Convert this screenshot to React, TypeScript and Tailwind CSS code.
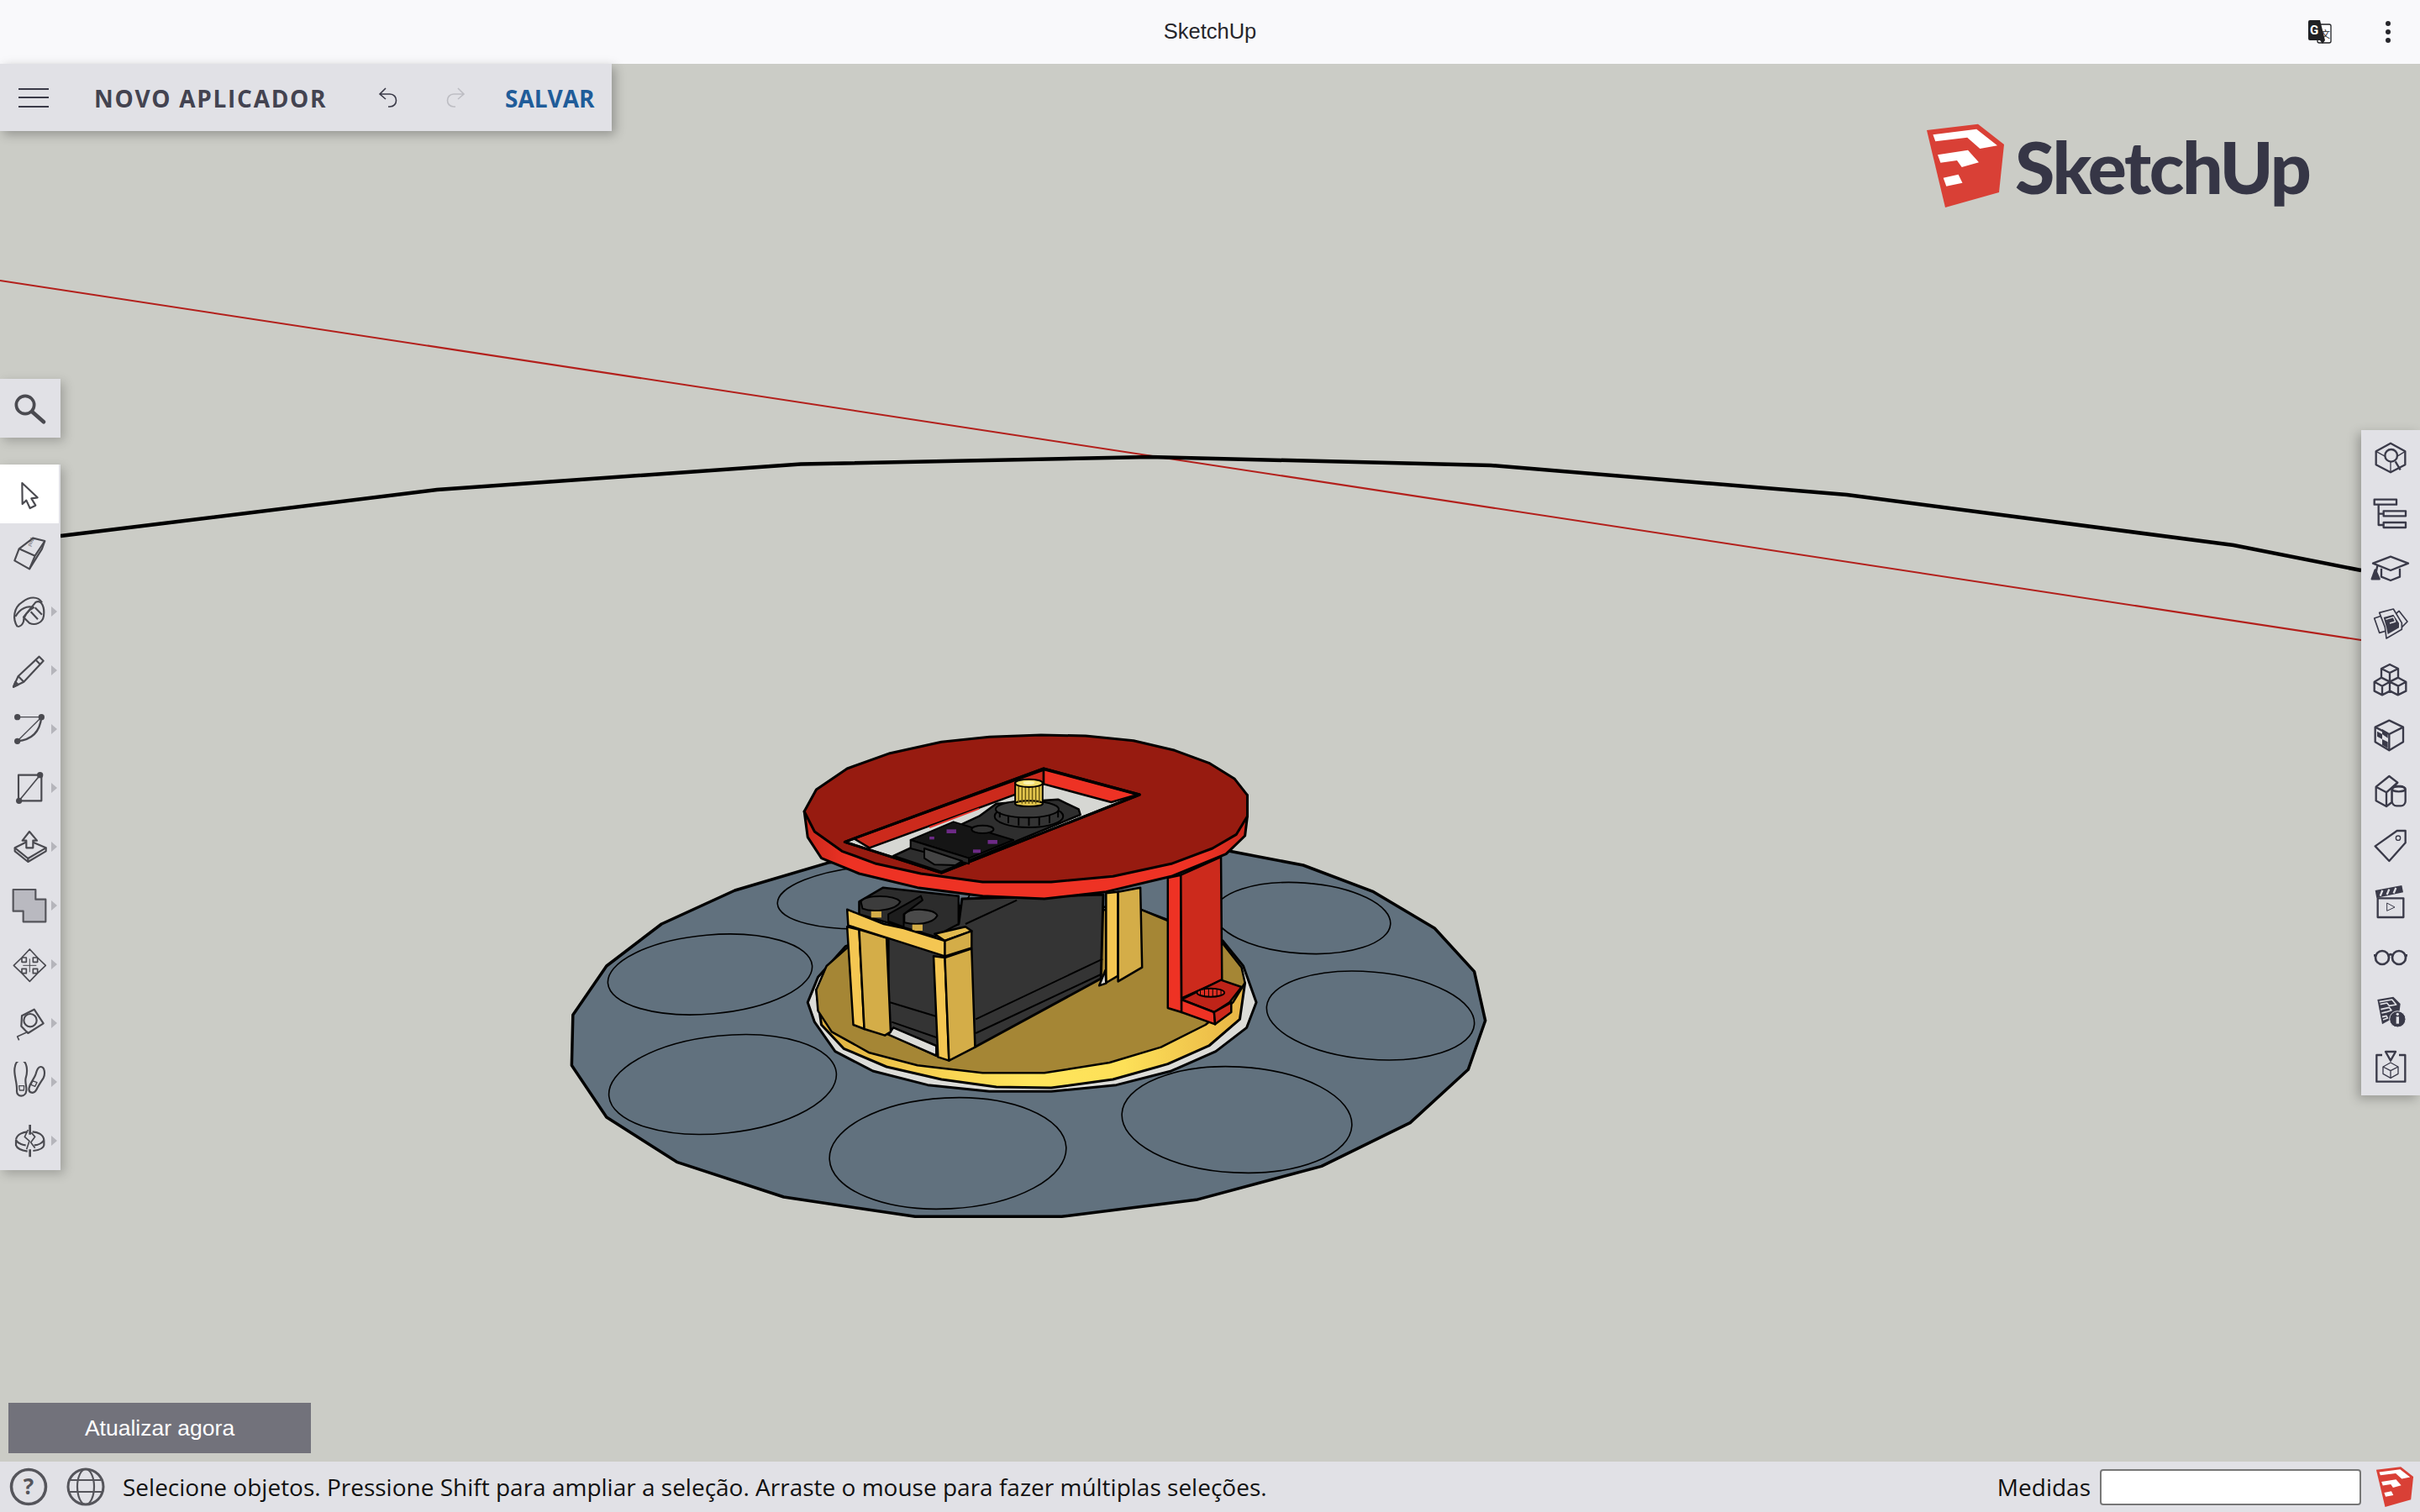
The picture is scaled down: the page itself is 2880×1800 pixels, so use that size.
import type { ReactNode } from "react";

const dark = "#3a3a49";
const tool = "#4a4a50";

function LogoCube({ className }: { className: string }) {
  return (
    <svg viewBox="0 0 92 100" className={className}>
      <polygon points="0,8 61,0.7 92,25 86,82 22,100" fill="#d94036" />
      <polygon points="7.4,13.3 59.2,6.7 84,26.3 63.3,30 48.2,16.7 10.3,21.3" fill="#fff" />
      <polygon points="13,37.3 49,31.7 62,46.3 41.7,52 36,44 16.4,46.7" fill="#fff" />
      <polygon points="19.7,64.7 37.6,60.7 42.5,70.7 23.3,74.7" fill="#fff" />
    </svg>
  );
}

// left toolbar icons, drawn at 3x so the coordinates follow the crop
function LeftIcon({ cy, children }: { cy: number; children: ReactNode }) {
  return (
    <svg
      viewBox={`36 ${cy - 72} 144 144`}
      className="h-[48px] w-[48px] shrink-0"
      fill="none"
      stroke={tool}
      strokeWidth="6.5"
      strokeLinejoin="round"
    >
      {children}
    </svg>
  );
}

function RightIcon({ cy, children }: { cy: number; children: ReactNode }) {
  return (
    <svg
      viewBox={`123 ${cy - 72} 144 144`}
      className="h-[48px] w-[48px]"
      fill="none"
      stroke={dark}
      strokeWidth="7"
      strokeLinejoin="round"
    >
      {children}
    </svg>
  );
}

const leftTools: { cy: number; arrow: boolean; icon: ReactNode }[] = [
  {
    cy: 654,
    arrow: false,
    icon: (
      <>
        <polygon points="52,682 68,640 118,602 160,612 150,640 105,712" />
        <path d="M68,640 L125,665 L105,712 M125,665 L160,612" />
        <text
          x="0"
          y="0"
          transform="translate(108,632) rotate(-62)"
          fontSize="20"
          fill={tool}
          stroke="none"
          fontFamily="Liberation Serif, serif"
        >
          pink
        </text>
      </>
    ),
  },
  {
    cy: 864,
    arrow: true,
    icon: (
      <>
        <path d="M62,918 C44,890 48,850 80,830 C105,810 135,808 150,832" />
        <path d="M55,882 C72,852 98,842 120,850 C100,860 84,880 84,900 C80,912 70,918 62,918" />
        <path d="M128,830 C150,822 160,850 156,880 C152,905 125,915 105,905 L84,884 L128,830 Z" />
        <path d="M110,865 L135,892 M125,850 L150,875" />
      </>
    ),
  },
  {
    cy: 1074,
    arrow: true,
    icon: (
      <>
        <polygon points="48,1133 65,1095 140,1025 155,1040 85,1115" />
        <path d="M65,1095 L85,1115 M128,1037 L143,1052" />
        <polygon points="48,1133 55,1115 65,1125" fill={tool} />
      </>
    ),
  },
  {
    cy: 1284,
    arrow: true,
    icon: (
      <>
        <path d="M62,1241 H148 L62,1327" strokeWidth="4" />
        <path d="M62,1327 Q140,1320 148,1241" strokeWidth="7" />
        <circle cx="62" cy="1241" r="11" fill={tool} stroke="none" />
        <circle cx="148" cy="1241" r="11" fill={tool} stroke="none" />
        <circle cx="62" cy="1327" r="11" fill={tool} stroke="none" />
      </>
    ),
  },
  {
    cy: 54,
    arrow: true,
    icon: (
      <>
        <path d="M143,8 H66 V100 H148 V8" />
        <path d="M68,100 L143,8" strokeWidth="5" />
        <circle cx="143" cy="8" r="11" fill={tool} stroke="none" />
        <circle cx="68" cy="100" r="11" fill={tool} stroke="none" />
      </>
    ),
  },
  {
    cy: 264,
    arrow: true,
    icon: (
      <>
        <polygon points="53,268 92,248 118,248 164,268 100,306" />
        <path d="M53,268 V280 L100,318 L164,280 V268 M100,306 V318" />
        <polygon points="105,210 132,242 118,242 118,268 94,268 94,242 80,242" fill="#e1e1e6" />
      </>
    ),
  },
  {
    cy: 474,
    arrow: true,
    icon: <polygon points="47,417 127,417 127,452 163,452 163,532 83,532 83,494 47,494" fill="#b9b9c0" stroke="#55555b" />,
  },
  {
    cy: 684,
    arrow: true,
    icon: (
      <>
        <polygon
          points="106,630 134,660 118,660 118,676 134,676 134,660 163,688 134,716 134,700 118,700 118,716 134,716 106,745 78,716 94,716 94,700 78,700 78,716 49,688 78,660 78,676 94,676 94,660 78,660"
          strokeWidth="5"
        />
        <path d="M106,664 V712 M82,688 H130" strokeWidth="3" />
      </>
    ),
  },
  {
    cy: 894,
    arrow: true,
    icon: (
      <>
        <polygon points="78,868 122,845 155,895 100,930 76,905" />
        <circle cx="108" cy="884" r="23" />
        <path d="M100,925 L62,942 L68,955" strokeWidth="5" />
      </>
    ),
  },
  {
    cy: 1104,
    arrow: true,
    icon: (
      <>
        <path d="M75,1027 C97,1027 100,1065 92,1090 C88,1105 96,1120 94,1135 C92,1160 58,1160 60,1135 C62,1110 50,1080 52,1060 C53,1040 60,1027 75,1027 Z" />
        <path d="M68,1118 L86,1118 L85,1134 L70,1134 Z" strokeWidth="4" />
        <path d="M145,1050 C160,1050 162,1075 155,1090 C145,1105 135,1120 130,1132 C122,1148 100,1145 104,1125 C108,1105 122,1095 128,1075 C132,1060 136,1050 145,1050 Z" />
        <path d="M116,1100 L132,1106 L125,1120 L111,1114 Z" strokeWidth="4" />
      </>
    ),
  },
  {
    cy: 1314,
    arrow: true,
    icon: (
      <>
        <path d="M57,1310 C60,1290 85,1283 98,1282 M116,1282 C135,1283 155,1292 157,1312" />
        <path d="M57,1310 V1330 C62,1345 85,1350 98,1352 M118,1350 C135,1348 155,1342 157,1330 V1312" />
        <path d="M57,1312 C65,1325 85,1330 92,1330 M122,1330 C135,1330 150,1322 157,1312" />
        <path d="M100,1275 L88,1300 L105,1315 L95,1345 M112,1285 L125,1300 L110,1320 L125,1340" strokeWidth="5" />
        <path d="M107,1257 V1292 M107,1345 V1372" strokeWidth="8" />
      </>
    ),
  },
];

const rightIcons: ReactNode[] = [
  <RightIcon cy={135} key="0">
    <polygon points="195,83 247,112 247,160 195,187 143,160 143,112" />
    <circle cx="197" cy="127" r="22" />
    <path d="M212,148 L230,178" strokeWidth="7" stroke={dark} />
    <path d="M143,112 L176,130 M247,112 L218,130 M195,150 V187" strokeWidth="4" />
  </RightIcon>,
  <RightIcon cy={333} key="1">
    <rect x="137" y="284" width="79" height="18" />
    <rect x="170" y="325" width="79" height="18" />
    <rect x="170" y="366" width="79" height="18" />
    <path d="M152,302 V375 H170 M152,335 H170" />
  </RightIcon>,
  <RightIcon cy={531} key="2">
    <polygon points="132,512 195,488 258,512 195,537" />
    <path d="M162,530 V560 L195,573 L228,560 V530" />
    <path d="M148,520 L142,550" />
    <polygon points="128,568 140,535 155,568" fill={dark} />
  </RightIcon>,
  <RightIcon cy={729} key="3">
    <polygon points="137,708 175,695 190,750 155,760" strokeWidth="5" />
    <polygon points="225,682 255,720 230,745 205,700" strokeWidth="5" />
    <polygon points="155,688 205,675 235,725 235,748 180,780 175,740" fill="#e1e1e6" strokeWidth="5" />
    <polygon points="170,705 205,695 225,725 225,742 185,765 180,740" fill={dark} stroke="none" />
    <path d="M178,712 L205,704 L212,720 L192,726" stroke="#e1e1e6" strokeWidth="4" />
  </RightIcon>,
  <RightIcon cy={927} key="4">
    <path d="M192,873 L222,888 V920 L192,935 L162,920 V888 Z M162,888 L192,903 L222,888 M192,903 V935" />
    <path d="M162,920 L137,935 V968 L165,982 L193,968 L221,982 L250,968 V935 L222,920 M137,935 L165,950 L192,935 L222,950 L250,935 M165,950 V982 M222,950 V982 M192,935 V968" />
  </RightIcon>,
  <RightIcon cy={1125} key="5">
    <polygon points="190,1073 240,1097 240,1150 190,1180 140,1150 140,1097" />
    <path d="M140,1097 L190,1122 L240,1097 M190,1122 V1180" />
    <path d="M147,1112 L165,1122 V1140 L147,1130 Z M165,1140 L185,1150 V1172 L165,1160 Z M165,1104 L185,1116 V1136 L165,1122 Z" fill={dark} stroke="none" />
  </RightIcon>,
  <RightIcon cy={123} key="6">
    <polygon points="143,110 190,72 220,95 200,115 200,165 180,180 143,160" />
    <path d="M143,110 L180,130 L220,95 M180,130 V180" />
    <rect x="200" y="108" width="48" height="70" rx="16" fill="#e1e1e6" />
    <ellipse cx="224" cy="118" rx="24" ry="9" />
  </RightIcon>,
  <RightIcon cy={321} key="7">
    <path d="M218,267 H248 V310 L190,375 L140,322 Z" />
    <circle cx="222" cy="293" r="8" strokeWidth="4" />
  </RightIcon>,
  <RightIcon cy={519} key="8">
    <rect x="149" y="508" width="92" height="68" />
    <polygon points="140,480 235,462 240,487 145,507" fill={dark} stroke="none" />
    <path d="M158,500 L166,480 M182,495 L190,476 M206,490 L214,471" stroke="#e1e1e6" strokeWidth="7" />
    <polygon points="182,525 210,540 182,553" strokeWidth="3" />
  </RightIcon>,
  <RightIcon cy={717} key="9">
    <circle cx="165" cy="720" r="24" strokeWidth="8" />
    <circle cx="225" cy="720" r="24" strokeWidth="8" />
    <path d="M135,712 H142 M248,712 H255 M188,712 Q195,705 202,712" strokeWidth="8" />
  </RightIcon>,
  <RightIcon cy={915} key="10">
    <polygon points="148,870 205,860 230,885 225,925 165,958" fill={dark} stroke="none" />
    <path d="M155,878 L200,870 L215,888 L190,892 L182,882 L158,887 M160,905 L190,898 L198,908 L180,914 L163,918 M165,932 L180,928 L184,936 L168,942" stroke="#e1e1e6" strokeWidth="5" />
    <circle cx="220" cy="940" r="29" fill={dark} stroke="#e1e1e6" strokeWidth="3" />
    <circle cx="220" cy="922" r="5" fill="#e1e1e6" stroke="none" />
    <rect x="215" y="931" width="10" height="25" fill="#e1e1e6" stroke="none" />
  </RightIcon>,
  <RightIcon cy={1113} key="11">
    <path d="M165,1068 H145 V1163 H247 V1068 H225" />
    <polygon points="177,1056 213,1056 195,1088" strokeWidth="7" />
    <polygon points="195,1095 222,1110 222,1135 195,1150 168,1135 168,1110" strokeWidth="4" />
    <path d="M168,1110 L195,1124 L222,1110 M195,1124 V1150" strokeWidth="4" />
  </RightIcon>,
];

const discPoints =
  "30,685 85,510 175,360 295,240 450,140 780,60 1105,100 1225,150 1340,245 1440,375 1505,530 1523,705 1495,880 1400,1070 1255,1225 1050,1345 830,1405 590,1405 375,1335 200,1210 85,1050 28,865";

const holes: [number, number, number, number, number][] = [
  [845, 1160, 122, 47, -5],
  [860, 1291, 136, 58, -6],
  [1128, 1373, 141, 66, -3],
  [1472, 1333, 137, 63, 3],
  [1631, 1209, 124, 52, 5],
  [1550, 1093, 105, 42, 4],
  [1040, 1068, 115, 37, -4],
];

function Part({ points, fill, width = 3 }: { points: string; fill: string; width?: number }) {
  return <polygon points={points} fill={fill} stroke="#000" strokeWidth={width} strokeLinejoin="round" vectorEffect="non-scaling-stroke" />;
}

function Scene() {
  return (
    <svg viewBox="0 76 2880 1664" className="absolute inset-0 h-full w-full">
      <defs>
        <linearGradient id="rim">
          <stop offset="0" stopColor="#dcae40" />
          <stop offset="0.25" stopColor="#f7d050" />
          <stop offset="0.5" stopColor="#ffe55c" />
          <stop offset="0.72" stopColor="#fde058" />
          <stop offset="1" stopColor="#e8b445" />
        </linearGradient>
        <linearGradient id="lid">
          <stop offset="0" stopColor="#c8281c" />
          <stop offset="0.1" stopColor="#ee3224" />
          <stop offset="0.9" stopColor="#ee3224" />
          <stop offset="1" stopColor="#c8281c" />
        </linearGradient>
      </defs>

      {/* axes */}
      <line x1="0" y1="334" x2="2810" y2="762" stroke="#b3201c" strokeWidth="2" />
      <polyline points="72,638 520,583 953,552.5 1368,544 1774,554 2198,589 2658,649 2810,679" fill="none" stroke="#000" strokeWidth="4.5" />

      {/* turntable */}
      <g transform="translate(660 980) scale(0.72727 0.33333)">
        <Part points={discPoints} fill="#61717e" width={3.5} />
      </g>
      {holes.map(([cx, cy, rx, ry, rot]) => (
        <ellipse key={cx} cx={cx} cy={cy} rx={rx} ry={ry} transform={`rotate(${rot} ${cx} ${cy})`} fill="none" stroke="#000" strokeWidth="1.6" />
      ))}

      <g transform="translate(900 840) scale(0.40816 0.33333)">
        {/* gold base */}
        <Part points="150,1060 170,1130 230,1235 340,1305 500,1355 680,1378 860,1378 1050,1355 1210,1305 1340,1235 1430,1150 1458,1060 1420,930 1360,840 1100,720 600,720 260,860 180,970" fill="#dcdcd8" />
        <Part points="175,1015 190,1140 255,1225 380,1290 540,1335 700,1362 860,1365 1040,1335 1200,1280 1320,1215 1410,1120 1425,990 1100,800 400,800" fill="url(#rim)" />
        <Part points="175,1015 205,930 270,860 600,730 1125,730 1360,850 1415,935 1425,990 1390,1060 1310,1140 1180,1220 1030,1275 840,1312 660,1312 470,1285 330,1240 220,1165 180,1090" fill="#a58635" width={2.5} />

        {/* back post */}
        <Part points="1020,670 1055,665 1055,965 1020,990" fill="#f4c652" width={2.5} />
        <Part points="1055,665 1120,650 1125,935 1055,985" fill="#d4ad48" width={2.5} />
        <Part points="1000,1000 1018,945 1020,992" fill="#dcdcd8" width={2.5} />

        {/* servo */}
        <Part points="385,830 385,1130 400,1180 525,1250 640,1218 1005,975 1012,675 600,690 590,780" fill="#343434" />
        <path d="M640,1120 L1010,905 M640,1170 L1005,960 M390,1060 L525,1110 M395,1130 L525,1185 M610,780 L760,695" fill="none" stroke="#000" strokeWidth="2" vectorEffect="non-scaling-stroke" />
        <Part points="385,1175 400,1150 525,1215 525,1250" fill="#dcdcd8" width={2.5} />

        {/* terminal block */}
        <Part points="300,700 370,650 590,680 590,780 520,825 300,745" fill="#2c2c2c" width={2.5} />
        <path d="M305,700 C320,675 400,675 420,700 C410,730 340,740 310,725 Z" fill="#3c3c3c" stroke="#000" strokeWidth="2" vectorEffect="non-scaling-stroke" />
        <path d="M432,745 C450,720 520,725 528,750 C515,780 465,785 432,775 Z" fill="#4a4a4a" stroke="#000" strokeWidth="2" vectorEffect="non-scaling-stroke" />
        <rect x="335" y="735" width="30" height="22" fill="#d4ad48" />
        <rect x="455" y="782" width="30" height="22" fill="#d4ad48" />
        <Part points="385,745 480,680 485,695 430,745 430,790 385,770" fill="#1d1d1d" width={2} />

        {/* front brackets */}
        <Part points="265,790 300,800 315,1155 283,1140" fill="#f4c652" width={2.5} />
        <Part points="300,800 380,830 392,1165 375,1178 315,1155" fill="#d4ad48" width={2.5} />
        <Part points="265,728 300,745 372,780 430,795 550,840 550,895 268,785" fill="#f4c652" width={2.5} />
        <Part points="520,815 610,790 628,805 550,840" fill="#e3bb4f" width={2.5} />
        <Part points="550,840 628,805 628,865 550,895" fill="#d4ad48" width={2.5} />
        <Part points="517,895 550,900 562,1268 530,1255" fill="#f4c652" width={2.5} />
        <Part points="550,900 628,868 638,1220 562,1268" fill="#d4ad48" width={2.5} />

        {/* red leg */}
        <Part points="1200,615 1238,605 1240,1095 1200,1080" fill="#ee3224" width={2.5} />
        <Part points="1238,605 1355,540 1358,980 1240,1045" fill="#cc2a1c" width={2.5} />
        <Part points="1240,1050 1355,980 1415,1005 1380,1060 1335,1095" fill="#bf2318" width={2.5} />
        <Part points="1240,1050 1335,1095 1338,1138 1240,1095" fill="#ee3224" width={2.5} />
        <Part points="1335,1095 1385,1060 1385,1095 1338,1138" fill="#cc2a1c" width={2.5} />
        <ellipse cx="1325" cy="1025" rx="40" ry="15" fill="#e03024" stroke="#000" strokeWidth="2" vectorEffect="non-scaling-stroke" />
        <path d="M1295,1015 V1035 M1307,1012 V1038 M1319,1010 V1040 M1331,1010 V1040 M1343,1012 V1038 M1355,1015 V1035" stroke="#000" strokeWidth="1" fill="none" vectorEffect="non-scaling-stroke" />

        {/* top plate */}
        <Part points="140,378 150,470 190,545 300,600 470,650 660,680 840,690 1020,665 1210,610 1370,530 1425,465 1432,395 1432,320" fill="url(#lid)" />
        <Part points="140,378 175,300 265,225 390,170 540,130 680,112 830,105 960,108 1100,125 1220,160 1320,205 1395,262 1432,320 1432,395 1400,460 1330,510 1210,565 1040,610 860,630 660,630 480,600 350,565 250,520 170,450" fill="#971b10" />

        {/* slot */}
        <Part points="258,487 838,225 1118,318 540,597" fill="#d6d7d3" />
        <Part points="285,475 838,230 838,280 650,365 330,508" fill="#cc2a1c" width={2.5} />
        <Part points="838,228 1112,318 1035,345 838,280" fill="#ee3224" width={2.5} />
        <Part points="400,537 650,395 700,350 880,335 940,370 945,390 540,594" fill="#2e2e2e" width={2.5} />
        <path d="M505,435 L650,368" stroke="#e8322a" strokeWidth="2" vectorEffect="non-scaling-stroke" />
        <Part points="258,487 838,225 1118,318 540,597" fill="none" />

        {/* gear and output shaft */}
        <ellipse cx="795" cy="395" rx="100" ry="40" fill="#333" stroke="#000" strokeWidth="2" vectorEffect="non-scaling-stroke" />
        <ellipse cx="790" cy="370" rx="92" ry="30" fill="#3b3b3b" stroke="#000" strokeWidth="2" vectorEffect="non-scaling-stroke" />
        <path d="M710,380 V400 M735,395 V420 M765,400 V428 M795,402 V430 M825,400 V428 M855,392 V420 M880,378 V400" stroke="#000" strokeWidth="2" fill="none" vectorEffect="non-scaling-stroke" />
        <rect x="755" y="275" width="80" height="75" fill="#e6c84e" stroke="#000" strokeWidth="2" vectorEffect="non-scaling-stroke" />
        <ellipse cx="795" cy="350" rx="40" ry="10" fill="#e6c84e" stroke="#000" strokeWidth="2" vectorEffect="non-scaling-stroke" />
        <path d="M765,285 V345 M775,290 V350 M785,290 V350 M795,290 V350 M805,290 V350 M815,290 V350 M825,285 V345" stroke="#6d5a12" strokeWidth="1.5" fill="none" vectorEffect="non-scaling-stroke" />
        <ellipse cx="795" cy="277" rx="40" ry="14" fill="#f3dc6a" stroke="#000" strokeWidth="2" vectorEffect="non-scaling-stroke" />
        <ellipse cx="795" cy="276" rx="17" ry="6" fill="#fbf3b0" />

        {/* connector on servo top */}
        <Part points="450,480 575,415 750,480 620,545" fill="#151515" width={2} />
        <Part points="450,480 620,545 620,565 450,510" fill="#2a2a2a" width={2} />
        <Part points="490,510 600,555 580,570 520,568 490,545" fill="#444" width={2} />
        <ellipse cx="660" cy="442" rx="32" ry="14" fill="#333" stroke="#000" strokeWidth="2" vectorEffect="non-scaling-stroke" />
        <rect x="555" y="442" width="28" height="14" fill="#6d2a86" />
        <rect x="675" y="480" width="28" height="14" fill="#6d2a86" />
        <rect x="632" y="514" width="22" height="12" fill="#6d2a86" />
        <rect x="505" y="468" width="14" height="10" fill="#6d2a86" />
      </g>
    </svg>
  );
}

export default function App() {
  return (
    <div className="flex h-screen flex-col overflow-hidden font-['Open_Sans',sans-serif]">
      {/* title bar */}
      <div className="relative flex h-[76px] shrink-0 items-center justify-center bg-[#f9f9fb] pb-[2px]">
        <span className="font-['Liberation_Sans',sans-serif] text-[25.5px] text-[#26262b]">SketchUp</span>
        <div className="absolute right-[35px] top-0 flex h-full items-center gap-[64px]">
          <svg viewBox="0 0 28 28" className="h-[28px] w-[28px]">
            <rect x="11" y="5" width="16" height="22" rx="2" fill="#fff" stroke="#202124" strokeWidth="1.3" />
            <path d="M2,0 H14 L20,24 H2 a2,2 0 0 1 -2,-2 V2 a2,2 0 0 1 2,-2 Z" fill="#202124" />
            <path d="M14,24 L20,24 L17,28 Z" fill="#202124" />
            <text x="2" y="17" fontSize="15" fontWeight="700" fill="#fff" fontFamily="Roboto, sans-serif">G</text>
            <text x="15" y="21" fontSize="11" fill="#202124" fontFamily="'Noto Sans CJK SC', sans-serif">文</text>
          </svg>
          <div className="flex flex-col gap-[4px]">
            <div className="h-[6px] w-[6px] rounded-full bg-[#26262b]" />
            <div className="h-[6px] w-[6px] rounded-full bg-[#26262b]" />
            <div className="h-[6px] w-[6px] rounded-full bg-[#26262b]" />
          </div>
        </div>
      </div>

      {/* canvas */}
      <div className="relative min-h-0 flex-1 bg-[#cbccc6]">
        <Scene />

        <div className="absolute left-[2293px] top-[71px] flex items-start">
          <LogoCube className="h-[100px] w-[92px]" />
          <span className="ml-[13px] mt-[-9px] font-['Lato',sans-serif] text-[86px] font-black leading-[120px] tracking-[-2.4px] text-[#363646]">SketchUp</span>
        </div>

        <div className="relative flex h-full justify-between">
          <div className="flex h-full flex-col items-start">
            <div className="flex h-[80px] w-[728px] items-center bg-[#e1e1e6] shadow-[4px_4px_12px_rgba(0,0,0,0.28)]">
              <div className="ml-[22px] flex w-[36px] flex-col gap-[8.5px]">
                <div className="h-[2px] bg-[#3a3a48]" />
                <div className="h-[2px] bg-[#3a3a48]" />
                <div className="h-[2px] bg-[#3a3a48]" />
              </div>
              <span className="ml-[54px] w-[278px] whitespace-nowrap pt-[2px] text-[28px] font-bold tracking-[1.7px] text-[#434350]">NOVO APLICADOR</span>
              <svg viewBox="0 0 24 24" className="ml-[60px] h-[24px] w-[24px]" fill="none" stroke="#3a3a48" strokeWidth="1.6">
                <path d="M9,1 L2,8 L9,14 M2,8 H14 C24,8 24,23 14,23 H12" />
              </svg>
              <svg viewBox="0 0 24 24" className="ml-[56px] h-[24px] w-[24px]" fill="none" stroke="#bdbdc3" strokeWidth="1.6">
                <path d="M15,1 L22,8 L15,14 M22,8 H10 C0,8 0,23 10,23 H12" />
              </svg>
              <span className="ml-[47px] pt-[2px] text-[28px] font-bold text-[#1f5c99]">SALVAR</span>
            </div>

            <div className="mt-[295px] flex h-[70px] w-[72px] items-center justify-center bg-[#e1e1e6] shadow-[4px_4px_12px_rgba(0,0,0,0.22)]">
              <svg viewBox="36 65 144 144" className="h-[48px] w-[48px]" fill="none" stroke={tool}>
                <circle cx="90" cy="125" r="32" strokeWidth="11" />
                <path d="M115,150 L156,186" strokeWidth="14" strokeLinecap="round" />
              </svg>
            </div>

            <div className="mt-[32px] flex w-[72px] flex-col bg-[#e1e1e6] shadow-[4px_4px_12px_rgba(0,0,0,0.22)]">
              <div className="flex h-[70px] w-[70px] items-center justify-center bg-white">
                <LeftIcon cy={444}>
                  <polygon points="82,405 137,457 115,460 130,485 110,495 97,467 83,480" fill="#fff" />
                </LeftIcon>
              </div>
              {leftTools.map((t) => (
                <div key={t.cy} className="flex h-[70px] items-center pl-[12px]">
                  <LeftIcon cy={t.cy}>{t.icon}</LeftIcon>
                  {t.arrow && (
                    <svg viewBox="0 0 7 12" className="ml-[1px] h-[12px] w-[7px]">
                      <polygon points="0,0 7,6 0,12" fill="#b5b5bb" />
                    </svg>
                  )}
                </div>
              ))}
            </div>

            <button className="mb-[10px] ml-[10px] mt-auto flex h-[60px] w-[360px] items-center justify-center bg-[#72727b] pt-[1px] font-['Liberation_Sans',sans-serif] text-[26.5px] text-white">
              Atualizar agora
            </button>
          </div>

          <div className="pt-[436px]">
            <div className="flex w-[70px] flex-col bg-[#e1e1e6] shadow-[-4px_4px_12px_rgba(0,0,0,0.25)]">
              {rightIcons.map((icon, i) => (
                <div key={i} className="flex h-[66px] items-center justify-center">
                  {icon}
                </div>
              ))}
            </div>
          </div>
        </div>
      </div>

      {/* status bar */}
      <div className="flex h-[60px] shrink-0 items-center bg-[#e1e1e6]">
        <svg viewBox="0 0 46 46" className="ml-[11px] h-[46px] w-[46px]">
          <circle cx="23" cy="23" r="20.5" fill="none" stroke="#55555b" strokeWidth="3.5" />
          <text x="23" y="32" textAnchor="middle" fontSize="26" fontWeight="700" fill="#55555b" fontFamily="'Open Sans', sans-serif">?</text>
        </svg>
        <svg viewBox="0 0 46 46" className="ml-[22px] h-[46px] w-[46px]" fill="none" stroke="#55555b" strokeWidth="2.2">
          <circle cx="23" cy="23" r="21" strokeWidth="3" />
          <ellipse cx="23" cy="23" rx="10" ry="21" />
          <path d="M3,15 H43 M3,29 H43" />
        </svg>
        <span className="ml-[21px] whitespace-nowrap text-[28px] text-[#111]">Selecione objetos. Pressione Shift para ampliar a seleção. Arraste o mouse para fazer múltiplas seleções.</span>
        <span className="ml-auto text-[28px] text-[#111]">Medidas</span>
        <input className="ml-[11px] h-[43px] w-[311px] rounded-[4px] border-2 border-[#777] bg-white" />
        <LogoCube className="ml-[17px] mr-[7px] h-[48px] w-[46px]" />
      </div>
    </div>
  );
}
